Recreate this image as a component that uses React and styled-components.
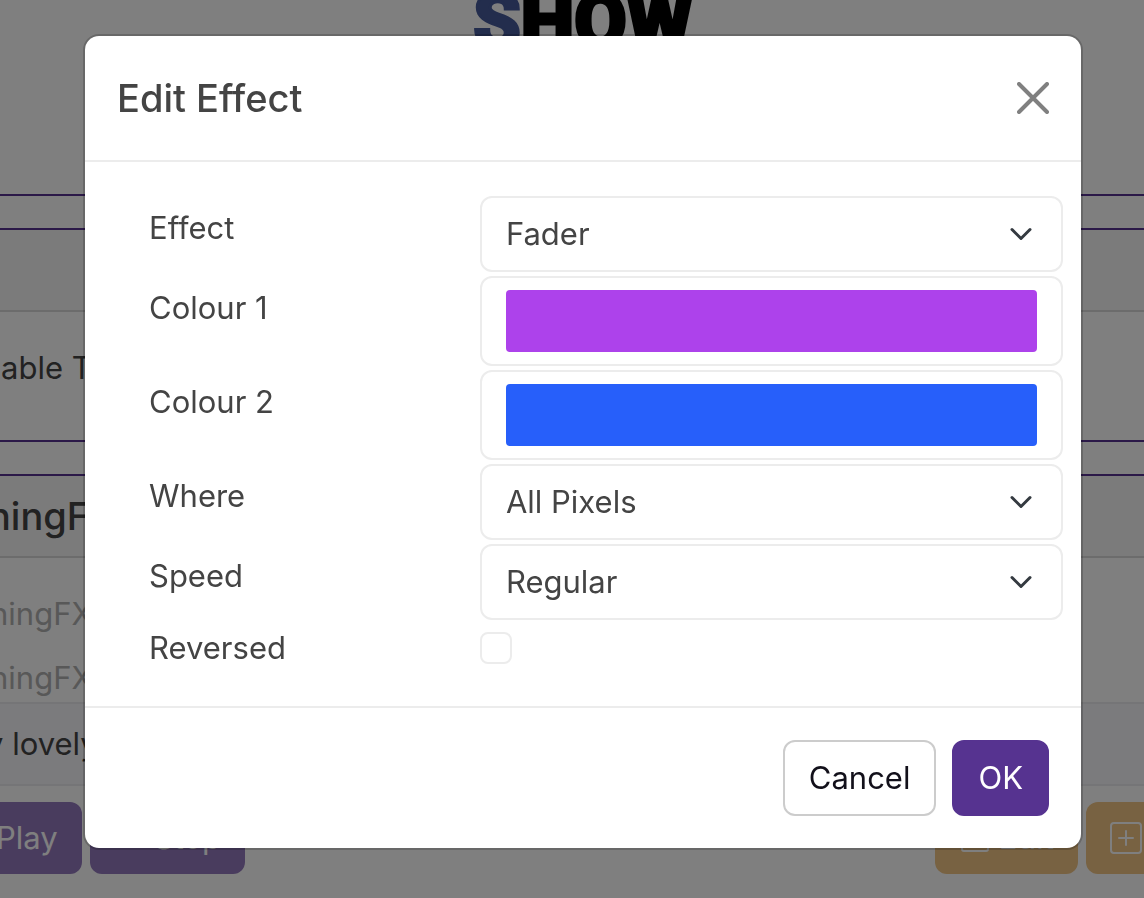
import { useState } from "react";
import styled, { createGlobalStyle } from "styled-components";
import {
	BsPencilSquare,
	BsPlayFill,
	BsPlusSquare,
	BsStopFill,
} from "react-icons/bs";

const EffectDialog = () => {
	const [effect, setEffect] = useState("Fader");
	const [colour1, setColour1] = useState("#ad42eb");
	const [colour2, setColour2] = useState("#275ffa");
	const [where, setWhere] = useState("All Pixels");
	const [speed, setSpeed] = useState("Regular");
	const [reversed, setReversed] = useState(false);

	return (
		<Backdrop>
			<Dialog role="dialog" aria-modal="true" aria-labelledby="dialogTitle">
				<DialogHead>
					<DialogTitle id="dialogTitle">Edit Effect</DialogTitle>
					<CloseBtn type="button" aria-label="Close">
						<svg width="32" height="32" viewBox="0 0 16 16">
							<path
								d="M1 1l14 14M15 1L1 15"
								stroke="#808080"
								strokeWidth="2"
								strokeLinecap="round"
							/>
						</svg>
					</CloseBtn>
				</DialogHead>
				<DialogForm>
					<SelectField
						id="effect"
						label="Effect"
						value={effect}
						options={["Fader", "Chaser", "Rainbow"]}
						onChange={setEffect}
					/>
					<ColourField
						id="colour1"
						label="Colour 1"
						value={colour1}
						onChange={setColour1}
					/>
					<ColourField
						id="colour2"
						label="Colour 2"
						value={colour2}
						onChange={setColour2}
					/>
					<SelectField
						id="where"
						label="Where"
						value={where}
						options={["All Pixels", "Odd Pixels", "Even Pixels"]}
						onChange={setWhere}
					/>
					<SelectField
						id="speed"
						label="Speed"
						value={speed}
						options={["Slow", "Regular", "Fast"]}
						onChange={setSpeed}
					/>
					<Field $center>
						<Label htmlFor="reversed">Reversed</Label>
						<Checkbox
							id="reversed"
							type="checkbox"
							checked={reversed}
							onChange={e => setReversed(e.target.checked)}
						/>
					</Field>
				</DialogForm>
				<DialogFoot>
					<DialogBtn type="button">Cancel</DialogBtn>
					<DialogBtn type="button" $primary>
						OK
					</DialogBtn>
				</DialogFoot>
			</Dialog>
		</Backdrop>
	);
};

const SelectField = ({ id, label, value, options, onChange }) => (
	<Field>
		<Label htmlFor={id}>{label}</Label>
		<SelectWrapper>
			<Select id={id} value={value} onChange={e => onChange(e.target.value)}>
				{options.map(option => (
					<option key={option}>{option}</option>
				))}
			</Select>
			<Chevron viewBox="0 0 16 16" aria-hidden="true">
				<path d="m2 5 6 6 6-6" />
			</Chevron>
		</SelectWrapper>
	</Field>
);

const ColourField = ({ id, label, value, onChange }) => (
	<Field>
		<Label htmlFor={id}>{label}</Label>
		<ColourInput
			id={id}
			type="color"
			value={value}
			onChange={e => onChange(e.target.value)}
		/>
	</Field>
);

const App = () => {
	return (
		<>
			<GlobalStyle />
			<Page>
				<Banner>
					<Logo>
						<span>S</span>HOW
					</Logo>
				</Banner>
				<Card>
					<CardHead />
					<CardBody>
						<CardText>able T</CardText>
					</CardBody>
				</Card>
				<Card>
					<CardHead>
						<CardTitle>ningFX</CardTitle>
					</CardHead>
					<EffectList>
						<MutedText>ningFX</MutedText>
						<MutedText>ningFX</MutedText>
					</EffectList>
					<SelectedRow>y lovely</SelectedRow>
					<Toolbar>
						<ToolBtn type="button" disabled>
							<BsPlayFill />
							Play
						</ToolBtn>
						<ToolBtn type="button" disabled>
							<BsStopFill />
							Stop
						</ToolBtn>
						<Spacer />
						<ToolBtn type="button" disabled $color="#f0c484">
							<BsPencilSquare />
							Edit
						</ToolBtn>
						<ToolBtn type="button" disabled $color="#f0c484" aria-label="Add">
							<BsPlusSquare />
						</ToolBtn>
					</Toolbar>
				</Card>
			</Page>
			<EffectDialog />
		</>
	);
};

const GlobalStyle = createGlobalStyle`
	* {
		box-sizing: border-box;
		margin: 0;
	}
	body {
		overflow: hidden;
		background-color: #fff;
		color: #444;
		font-family: Inter, "Liberation Sans", sans-serif;
		font-size: 31px;
		line-height: 48px;
	}
	button, input, select {
		font: inherit;
	}
`;

/* The page is wider than the window on both sides. */
const Page = styled.main`
	display: flex;
	flex-direction: column;
	gap: 32px;
	margin: 0 -24px 0 -70px;
`;
const Banner = styled.header`
	height: 196px;
	padding-left: 70px;
	padding-right: 2px;
	border-bottom: 2px solid #563390;
	overflow: hidden;
`;
const Logo = styled.h1`
	margin-top: -17px;
	color: #000;
	font-family: Roboto, "Liberation Sans", sans-serif;
	font-size: 76px;
	font-weight: 900;
	line-height: 76px;
	text-align: center;
	-webkit-text-stroke: 3px currentColor;

	span {
		color: #465a9a;
	}
`;
const Card = styled.section`
	border: 2px solid #563390;
`;
const CardHead = styled.div`
	display: flex;
	align-items: center;
	height: 82px;
	padding-left: 56px;
	border-bottom: 2px solid #d8d8d8;
	background-color: #f7f7f7;
`;
const CardTitle = styled.h2`
	font-size: 38px;
	font-weight: 500;
`;
const CardBody = styled.div`
	padding: 32px 0 48px 69px;
`;
const CardText = styled.p`
	white-space: nowrap;
`;
const EffectList = styled.div`
	display: flex;
	flex-direction: column;
	gap: 16px;
	padding: 32px 0 0 58px;
`;
const MutedText = styled.p`
	color: #b0b0b0;
`;
const SelectedRow = styled.p`
	padding: 16px 0 16px 54px;
	border-top: 2px solid #ebebee;
	border-bottom: 2px solid #ebebee;
	background-color: #f6f6fa;
`;
const Toolbar = styled.div`
	display: flex;
	gap: 8px;
	padding: 16px 0 32px;
`;
const Spacer = styled.div`
	flex: 1;
`;
const ToolBtn = styled.button`
	display: flex;
	align-items: center;
	gap: 8px;
	height: 72px;
	padding: 0 24px;
	border: none;
	border-radius: 12px;
	background-color: ${({ $color }) => $color || "#9278bc"};
	color: #fff;

	svg {
		width: 32px;
		height: 32px;
	}
`;

const Backdrop = styled.div`
	position: fixed;
	inset: 0;
	display: flex;
	justify-content: center;
	align-items: flex-start;
	padding: 34px 61px 0 83px;
	background-color: rgba(0, 0, 0, 0.5);
	z-index: 1000;
`;
const Dialog = styled.div`
	width: 100%;
	max-width: 1000px;
	border: 2px solid rgba(0, 0, 0, 0.18);
	border-radius: 16px;
	background-color: #fff;
	background-clip: padding-box;
`;
const DialogHead = styled.div`
	display: flex;
	justify-content: space-between;
	align-items: center;
	padding: 32px;
	border-bottom: 2px solid #ececec;
`;
const DialogTitle = styled.h2`
	font-size: 38px;
	font-weight: 500;
	line-height: 60px;
`;
const CloseBtn = styled.button`
	display: flex;
	padding: 0;
	border: none;
	background: none;
`;
const DialogForm = styled.form`
	display: flex;
	flex-direction: column;
	gap: 4px;
	padding: 34px 18px 34px 64px;
`;
const Field = styled.div`
	display: grid;
	grid-template-columns: 21fr 37fr;
	align-items: ${({ $center }) => ($center ? "center" : "start")};

	label {
		padding-top: ${({ $center }) => ($center ? "0" : "8px")};
	}
`;
const Label = styled.label`
	white-space: nowrap;
`;
const SelectWrapper = styled.div`
	display: grid;
	align-items: center;
`;
const Select = styled.select`
	grid-area: 1 / 1;
	width: 100%;
	height: 76px;
	padding: 0 72px 0 24px;
	border: 2px solid #ececec;
	border-radius: 12px;
	background-color: #fff;
	color: #444;
	appearance: none;
`;
const Chevron = styled.svg`
	grid-area: 1 / 1;
	justify-self: end;
	width: 24px;
	height: 24px;
	margin-right: 30px;
	fill: none;
	stroke: #343a40;
	stroke-width: 2;
	stroke-linecap: round;
	stroke-linejoin: round;
	pointer-events: none;
`;
const ColourInput = styled.input`
	width: 100%;
	height: 90px;
	padding: 12px 24px;
	border: 2px solid #ececec;
	border-radius: 12px;
	background-color: #fff;
	appearance: none;

	&::-webkit-color-swatch-wrapper {
		padding: 0;
	}
	&::-webkit-color-swatch {
		border: none;
		border-radius: 4px;
	}
`;
const Checkbox = styled.input`
	width: 32px;
	height: 32px;
	margin: 0;
	border: 2px solid #ececec;
	border-radius: 8px;
	background-color: #fff;
	appearance: none;

	&:checked {
		background-color: #563390;
	}
`;
const DialogFoot = styled.div`
	display: flex;
	justify-content: flex-end;
	gap: 16px;
	padding: 32px;
	border-top: 2px solid #ececec;
`;
const DialogBtn = styled.button`
	padding: 12px 24px;
	border: 2px solid ${({ $primary }) => ($primary ? "#563390" : "#ccc")};
	border-radius: 12px;
	background-color: ${({ $primary }) => ($primary ? "#563390" : "#fff")};
	color: ${({ $primary }) => ($primary ? "#fff" : "#12101a")};
`;

export default App;
